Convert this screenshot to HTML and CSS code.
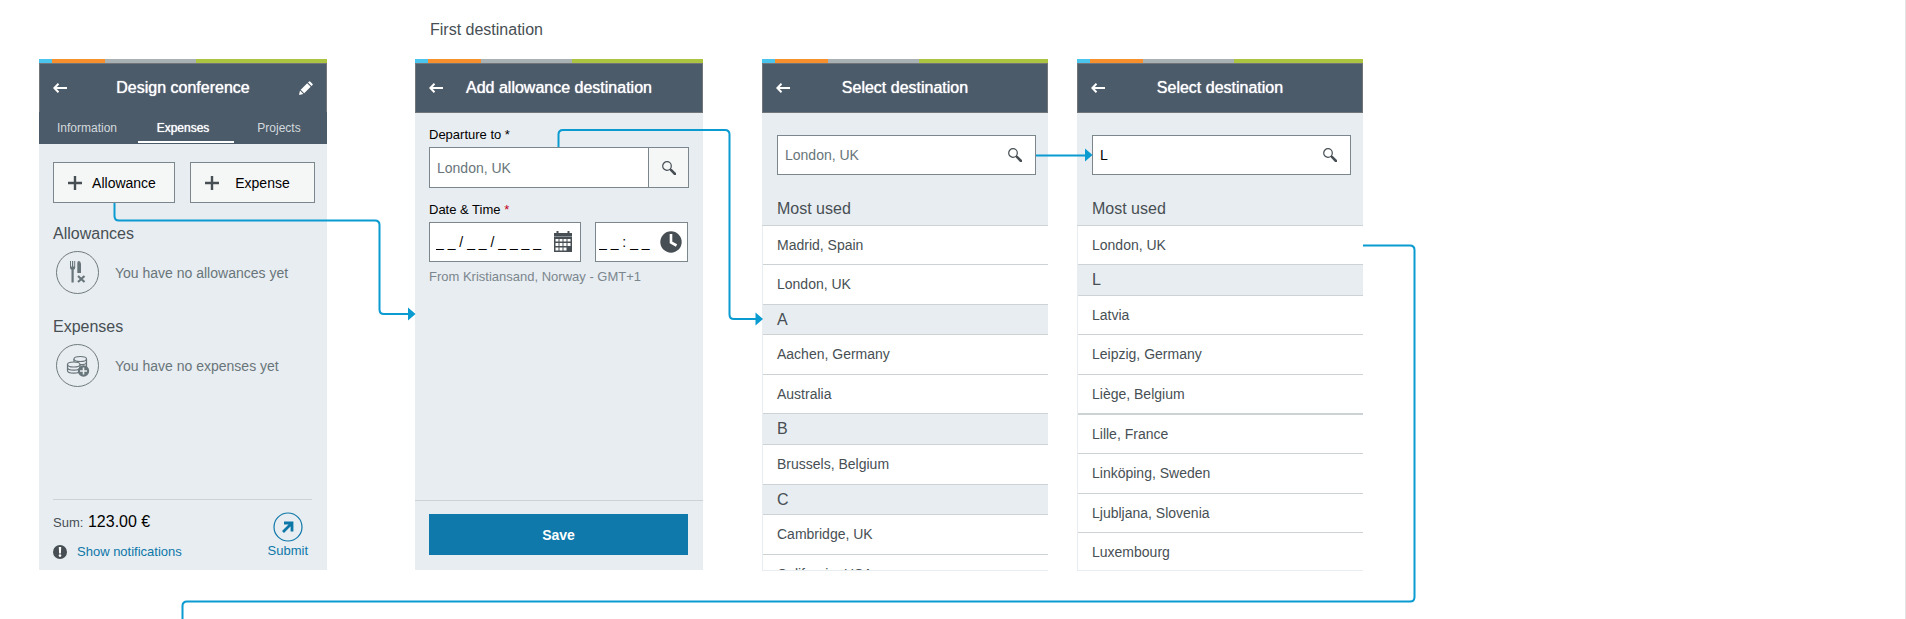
FILE: index.html
```html
<!DOCTYPE html>
<html lang="en">
<head>
<meta charset="utf-8">
<title>Allowance flow</title>
<link rel="stylesheet" href="styles.css">
</head>
<body>
<svg class="defs" aria-hidden="true">
  <symbol id="back" viewBox="0 0 14 10"><path d="M1 5H14M5.500 0.800L1.300 5L5.500 9.200" fill="none" stroke="currentColor" stroke-width="2"/></symbol>
  <symbol id="plus" viewBox="0 0 14 14"><path d="M7 0V14M0 7H14" stroke="currentColor" stroke-width="2.400"/></symbol>
  <symbol id="search" viewBox="0 0 14 14"><circle cx="5" cy="5" r="4.300" fill="none" stroke="currentColor" stroke-width="1.200"/><path d="M8 8L9.500 9.500" stroke="currentColor" stroke-width="1.400"/><path d="M9.200 9.200L13 13" stroke="currentColor" stroke-width="2.600" stroke-linecap="round"/></symbol>
</svg>
<main class="flow">
  <p class="caption">First destination</p>

  <section class="screen screen-expenses">
    <div class="stripe"></div>
    <header class="bar bar-open">
      <button class="icon-btn" aria-label="Back"><svg width="14" height="10"><use href="#back"/></svg></button>
      <h1 class="title">Design conference</h1>
      <button class="icon-btn" aria-label="Edit"><svg width="14" height="14" viewBox="0 0 14 14"><path d="M0 14L1 9.600L4.400 13ZM1.700 8.800L8.200 2.300L11.700 5.800L5.200 12.300ZM9 1.500L10.100 0.400Q10.600 0 11.100 0.400L13.600 2.900Q14 3.400 13.600 3.900L12.500 5Z" fill="currentColor"/></svg></button>
    </header>
    <nav class="tabs">
      <a class="tab" href="#information">Information</a>
      <a class="tab tab-active" href="#expenses">Expenses</a>
      <a class="tab" href="#projects">Projects</a>
    </nav>
    <div class="content">
      <div class="actions">
        <button class="add"><svg width="14" height="14"><use href="#plus"/></svg><span>Allowance</span></button>
        <button class="add"><svg width="14" height="14"><use href="#plus"/></svg><span>Expense</span></button>
      </div>
      <h2 class="group">Allowances</h2>
      <div class="empty">
        <svg width="43" height="43" viewBox="0 0 43 43"><circle cx="21.500" cy="21.500" r="21" fill="none" stroke="#6f797d"/>
          <path d="M14 10V16.500Q14 18.500 15.500 18.800V31.500H17.700V18.800Q19.200 18.500 19.200 16.500V10H18.200V15.500H17.200V10H16V15.500H15V10Z" fill="#68757a"/>
          <path d="M21.300 22V12Q21.300 10 23 10Q25 10.500 25 14V22Z" fill="#68757a"/>
          <path d="M22 25L28.500 31M28.500 25L22 31" stroke="#68757a" stroke-width="2.200"/></svg>
        <p>You have no allowances yet</p>
      </div>
      <h2 class="group">Expenses</h2>
      <div class="empty">
        <svg width="43" height="43" viewBox="0 0 43 43"><circle cx="21.500" cy="21.500" r="21" fill="none" stroke="#6f797d"/>
          <g fill="#e8edf1" stroke="#68757a" stroke-width="1.200">
            <path d="M18 15V24.500C18 28 30.500 28 30.500 24.500V15"/>
            <path d="M18 18.200C18 21.500 30.500 21.500 30.500 18.200M18 21.400C18 24.700 30.500 24.700 30.500 21.400" fill="none"/>
            <ellipse cx="24.250" cy="15" rx="6.250" ry="2.500"/>
            <path d="M11.500 20.500V26.500C11.500 30 24 30 24 26.500V20.500"/>
            <path d="M11.500 23.500C11.500 27 24 27 24 23.500" fill="none"/>
            <ellipse cx="17.750" cy="20.500" rx="6.250" ry="2.500"/>
          </g>
          <circle cx="27.500" cy="27" r="5.700" fill="#68757a"/><path d="M27.500 23.500V30.500M24 27H31" stroke="#e8edf1" stroke-width="1.600"/></svg>
        <p>You have no expenses yet</p>
      </div>
    </div>
    <footer class="summary">
      <div class="totals">
        <p class="sum">Sum: <strong>123.00 €</strong></p>
        <a class="notify" href="#notifications"><svg width="14" height="14" viewBox="0 0 14 14"><circle cx="7" cy="7" r="7" fill="#474f54"/><path d="M5.800 2H8.200L7.900 8.400H6.100Z" fill="#fff"/><circle cx="7" cy="10.600" r="1.300" fill="#fff"/></svg>Show notifications</a>
      </div>
      <button class="submit"><svg width="30" height="30" viewBox="0 0 30 30"><circle cx="15" cy="15" r="14" fill="none" stroke="currentColor" stroke-width="1.200"/><path d="M10 20L18.500 11.500M11 11H19V19.500" fill="none" stroke="currentColor" stroke-width="2.800"/></svg>Submit</button>
    </footer>
  </section>

  <section class="screen screen-add">
    <div class="stripe"></div>
    <header class="bar">
      <button class="icon-btn" aria-label="Back"><svg width="14" height="10"><use href="#back"/></svg></button>
      <h1 class="title">Add allowance destination</h1>
    </header>
    <form class="form">
      <label class="label" for="departure">Departure to *</label>
      <div class="field">
        <input class="input" id="departure" type="text" value="London, UK">
        <button class="field-btn" type="button" aria-label="Search"><svg width="14" height="14"><use href="#search"/></svg></button>
      </div>
      <label class="label label-date" for="date">Date &amp; Time <span class="required">*</span></label>
      <div class="when">
        <div class="field field-mask">
          <input class="input input-mask" id="date" type="text" value="_ _ / _ _ / _ _ _ _">
          <svg width="20" height="22" viewBox="0 0 20 22"><path d="M1 2H19V21H1ZM3.500 0H5.500V3H3.500ZM14.500 0H16.500V3H14.500Z" fill="#474f54"/><path d="M1 5.500H19" stroke="#8b9296"/><path d="M2.500 8h3v2.600h-3zM6.500 8h3v2.600h-3zM10.500 8h3v2.600h-3zM14.500 8h3v2.600h-3zM2.500 12h3v3h-3zM6.500 12h3v3h-3zM10.500 12h3v3h-3zM14.500 12h3v3h-3zM2.500 16.500h3v3h-3zM6.500 16.500h3v3h-3zM10.500 16.500h3v3h-3z" fill="#fff"/></svg>
        </div>
        <div class="field field-mask field-time">
          <input class="input input-mask" aria-label="Time" type="text" value="_ _ : _ _">
          <svg width="22" height="22" viewBox="0 0 22 22"><circle cx="11" cy="11" r="10.700" fill="#474f54"/><path d="M11 3V11.500L16.500 14.500" fill="none" stroke="#fff" stroke-width="2.600"/></svg>
        </div>
      </div>
      <p class="hint">From Kristiansand, Norway - GMT+1</p>
    </form>
    <footer class="save-bar"><button class="save">Save</button></footer>
  </section>

  <section class="screen screen-list">
    <div class="stripe"></div>
    <header class="bar">
      <button class="icon-btn" aria-label="Back"><svg width="14" height="10"><use href="#back"/></svg></button>
      <h1 class="title">Select destination</h1>
    </header>
    <div class="finder field">
      <input class="input" aria-label="Destination" type="text" value="London, UK">
      <svg width="14" height="14"><use href="#search"/></svg>
    </div>
    <h2 class="most-used">Most used</h2>
    <div class="list">
      <a class="row row-tight" href="#madrid">Madrid, Spain</a>
      <a class="row" href="#london">London, UK</a>
      <h3 class="letter">A</h3>
      <a class="row" href="#aachen">Aachen, Germany</a>
      <a class="row row-tight" href="#australia">Australia</a>
      <h3 class="letter letter-tall">B</h3>
      <a class="row" href="#brussels">Brussels, Belgium</a>
      <h3 class="letter">C</h3>
      <a class="row" href="#cambridge">Cambridge, UK</a>
      <a class="row" href="#california">California, USA</a>
    </div>
  </section>

  <section class="screen screen-search">
    <div class="stripe"></div>
    <header class="bar">
      <button class="icon-btn" aria-label="Back"><svg width="14" height="10"><use href="#back"/></svg></button>
      <h1 class="title">Select destination</h1>
    </header>
    <div class="finder field">
      <input class="input input-typed" aria-label="Destination" type="text" value="L">
      <svg width="14" height="14"><use href="#search"/></svg>
    </div>
    <h2 class="most-used">Most used</h2>
    <div class="list">
      <a class="row row-tight" href="#london">London, UK</a>
      <h3 class="letter letter-tall">L</h3>
      <a class="row row-tight" href="#latvia">Latvia</a>
      <a class="row" href="#leipzig">Leipzig, Germany</a>
      <a class="row row-thick" href="#liege">Liège, Belgium</a>
      <a class="row row-tight" href="#lille">Lille, France</a>
      <a class="row" href="#linkoping">Linköping, Sweden</a>
      <a class="row row-tight" href="#ljubljana">Ljubljana, Slovenia</a>
      <a class="row" href="#luxembourg">Luxembourg</a>
    </div>
  </section>

  <svg class="connectors" width="1440" height="619" viewBox="0 0 1440 619" aria-hidden="true">
    <g fill="none" stroke="#0a9bd1" stroke-width="2">
      <path d="M114.500 203V216Q114.500 220.500 119 220.500H375Q379.500 220.500 379.500 225V309.500Q379.500 314 384 314H409"/>
      <path d="M558.500 147V134.500Q558.500 130 563 130H725Q729.500 130 729.500 134.500V314.500Q729.500 319 734 319H756"/>
      <path d="M1036 155.500H1086"/>
      <path d="M1363 245.500H1410Q1414.500 245.500 1414.500 250V597Q1414.500 601.500 1410 601.500H187Q182.500 601.500 182.500 606V619"/>
    </g>
    <path d="M408 307.500L415.500 314L408 320.500ZM755.500 312.500L763 319L755.500 325.500ZM1085 148.500L1092.500 155L1085 161.500Z" fill="#0a9bd1"/>
  </svg>
</main>
</body>
</html>
```
FILE: styles.css
```css
* { box-sizing: border-box; }

body {
  margin: 0;
  background: #fff;
  color: #474f54;
  font: 14px/20px "Liberation Sans", Arial, sans-serif;
}

h1, h2, h3, p { margin: 0; font-weight: 400; }
h1, h2, h3 { font-size: 16px; }
button, input { font: inherit; color: inherit; margin: 0; padding: 0; border: 0; background: none; border-radius: 0; }
button { cursor: pointer; }
a { color: inherit; text-decoration: none; }
svg { display: block; flex: none; }

.defs { position: absolute; width: 0; height: 0; }

.flow {
  position: relative;
  display: grid;
  grid-template-columns: 288px 288px 286px 286px;
  grid-template-rows: auto 1fr;
  min-height: 100vh;
  padding-left: 39px;
  border-right: 1px solid #e4e4e4;
  align-items: start;
  overflow: hidden;
}
.flow { column-gap: 0; grid-template-columns: 288px 88px 288px 59px 286px 29px 286px; }
.caption { grid-area: 1 / 3; padding: 20px 15px 19px; font-size: 16px; }
.screen-expenses { grid-area: 2 / 1; }
.screen-add { grid-area: 2 / 3; }
.screen-list { grid-area: 2 / 5; }
.screen-search { grid-area: 2 / 7; }

.connectors { position: absolute; left: 0; top: 0; pointer-events: none; }

.screen { display: flex; flex-direction: column; min-height: 511px; background: #e8edf1; }
.screen-list, .screen-search { height: 512px; padding: 0 0 1px; overflow: hidden; }

.stripe {
  flex: none;
  height: 4px;
  background: linear-gradient(to right, #49c5ee 13px, #f7902c 13px 66px, #a8b1b4 66px 157px, #acc541 157px);
}

.bar {
  flex: none;
  display: grid;
  grid-template-columns: 14px 1fr 14px;
  align-items: center;
  height: 50px;
  padding: 0 13px;
  border: 1px solid #72767a;
  background: #4b5b69;
  color: #fff;
}
.bar-open { height: 49px; border-bottom: 0; }
.title { text-align: center; white-space: nowrap; text-shadow: 0 0 1px #fff; }

.tabs { display: grid; grid-template-columns: repeat(3, 1fr); background: #4b5b69; color: #d3d9dd; font-size: 12px; text-align: center; }
.tab { position: relative; height: 32px; line-height: 32px; }
.tab-active { color: #fff; text-shadow: 0 0 1px #fff; }
.tab-active::after { content: ""; position: absolute; left: 3px; bottom: 1px; width: 100%; height: 2px; background: #fff; }

.content { flex: 1; padding: 18px 12px 0 14px; }
.actions { display: grid; grid-template-columns: 122px 1fr; gap: 15px; margin-bottom: 21px; }
.add { display: flex; align-items: center; height: 41px; padding: 0 8px 0 14px; border: 1px solid #7b868d; background: #f5f7f7; }
.add svg { color: #474f54; }
.add span { flex: 1; color: #000; }
.group { margin-bottom: 7px; }
.empty { display: flex; align-items: center; gap: 16px; margin-bottom: 23px; padding-left: 3px; color: #68757a; }

.summary { display: flex; justify-content: space-between; margin: 0 15px 0 14px; padding: 12px 4px 8px 0; border-top: 1px solid #cdd2d5; font-size: 13px; }
.sum strong { margin-left: 1px; color: #000; font-size: 16px; font-weight: 400; }
.notify { display: flex; align-items: center; gap: 10px; margin-top: 9px; color: #0d77a8; }
.submit { display: flex; flex-direction: column; align-items: center; color: #0d77a8; line-height: 18px; }

.form { flex: 1; padding: 12px 14px 0; }
.label { display: block; margin-bottom: 2px; color: #000; font-size: 13px; }
.label-date { margin-top: 12px; }
.required { color: #c4001a; }
.field { display: flex; align-items: center; height: 41px; border: 1px solid #7b868d; background: #fff; }
.field svg { color: #474f54; }
.input { flex: 1; min-width: 0; height: 100%; padding-left: 7px; color: #68757a; outline: 0; }
.input-typed { color: #000; }
.field-btn { display: flex; align-items: center; justify-content: center; width: 40px; height: 100%; border-left: 1px solid #7b868d; background: #f5f7f7; }
.when { display: grid; grid-template-columns: 152px 93px; gap: 14px; }
.field-mask { height: 40px; padding-right: 7px; }
.field-time { padding-right: 5px; }
.input-mask { padding-left: 6px; color: #000; }
.field-time .input-mask { padding-left: 3px; }
.hint { margin-top: 5px; color: #7b868d; font-size: 13px; white-space: nowrap; }
.save-bar { padding: 13px 15px 15px 14px; border-top: 1px solid #cdd2d5; }
.save { display: block; width: 100%; height: 41px; background: #0e79aa; color: #fff; font-weight: 700; }

.finder { flex: none; height: 40px; margin: 22px 12px 0 15px; padding-right: 13px; }
.most-used { flex: none; padding: 24px 15px 6px; border-bottom: 1px solid #cdd2d5; }
.list { flex: 1; min-height: 0; margin-left: 1px; background: #fff; overflow: hidden; }
.row { display: block; height: 40px; padding-left: 14px; border-bottom: 1px solid #cdd2d5; line-height: 39px; }
.row-tight { height: 39px; }
.row-thick { border-bottom-width: 2px; }
.letter { height: 30px; padding-left: 14px; border-bottom: 1px solid #cdd2d5; background: #e8edf1; line-height: 30px; }
.letter-tall { height: 31px; }
```
